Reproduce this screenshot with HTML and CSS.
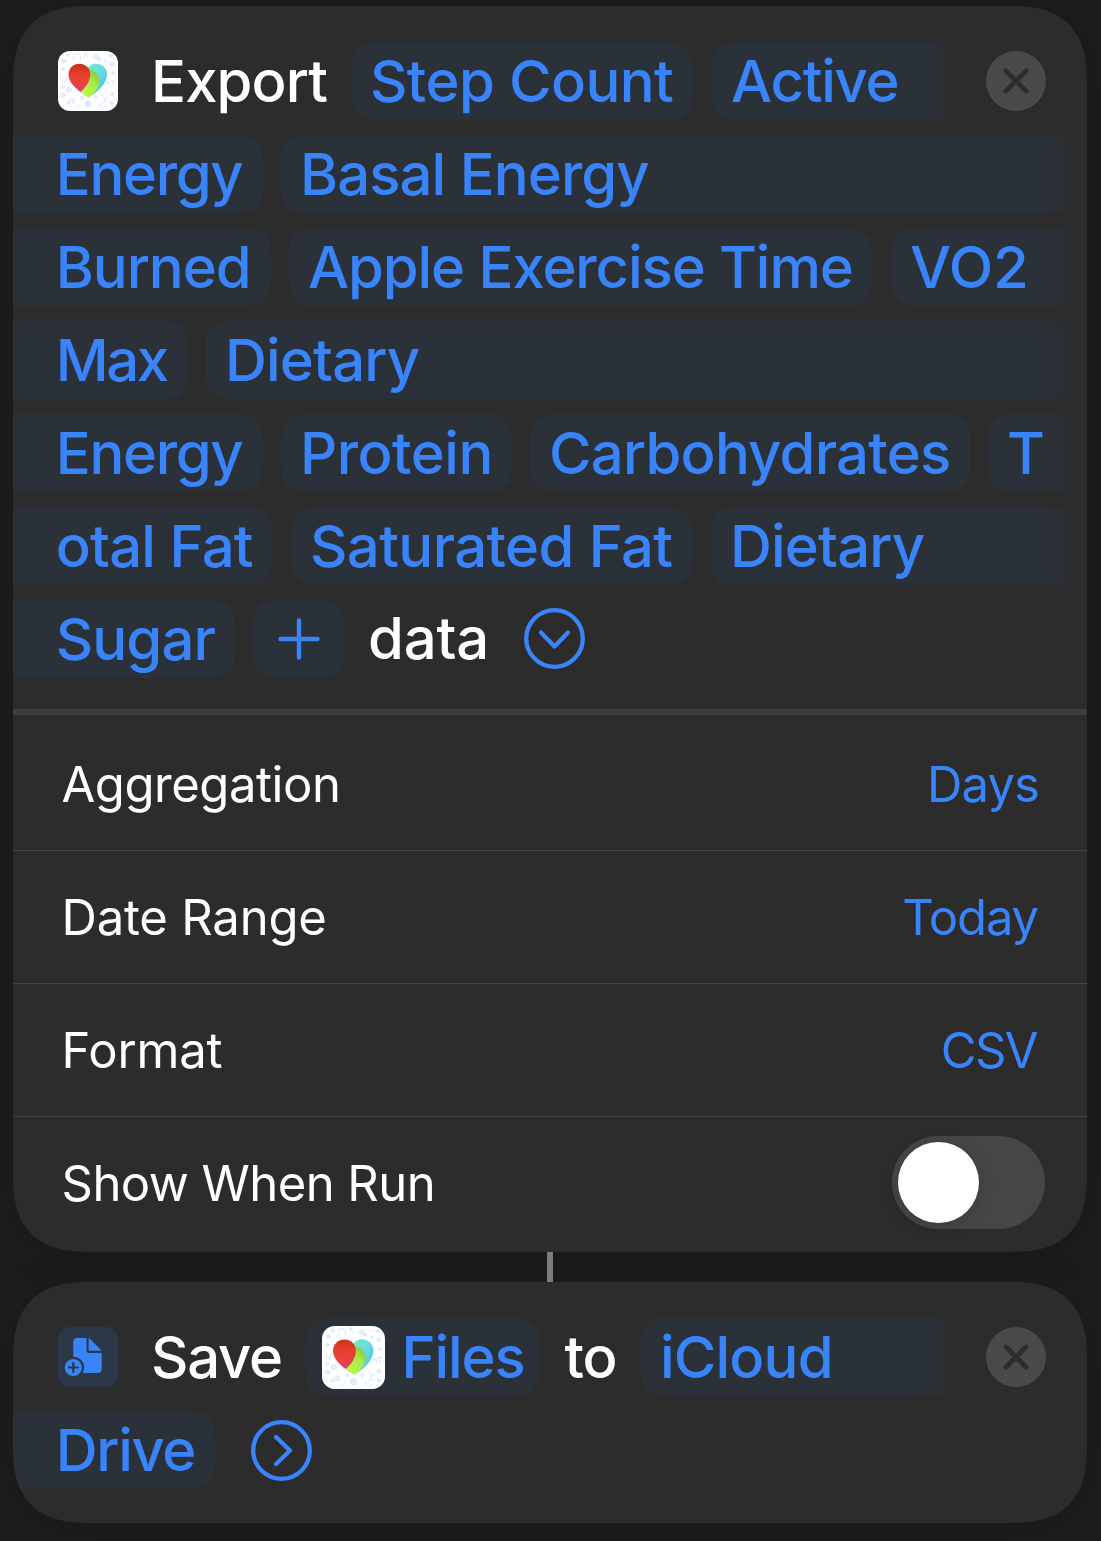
FILE: index.html
```html
<!DOCTYPE html>
<html lang="en">
<head>
<meta charset="utf-8">
<title>Shortcut</title>
<link rel="stylesheet" href="styles.css">
</head>
<body>
<svg class="defs" width="0" height="0" aria-hidden="true">
  <defs>
    <linearGradient id="red" x1="0" y1="0" x2="0" y2="1"><stop offset="0" stop-color="#c8321f"/><stop offset=".4" stop-color="#ea402c"/><stop offset=".7" stop-color="#ea4140"/><stop offset="1" stop-color="#e03a86"/></linearGradient>
    <linearGradient id="green" x1="1" y1="0" x2=".3" y2="1"><stop offset="0" stop-color="#7fb52c"/><stop offset=".45" stop-color="#a4ec48"/><stop offset="1" stop-color="#bdf94a"/></linearGradient>
    <linearGradient id="cyan" x1="0" y1="0" x2="1" y2="1"><stop offset="0" stop-color="#74ecc8"/><stop offset=".5" stop-color="#66d9e2"/><stop offset="1" stop-color="#4fb4d6"/></linearGradient>
    <symbol id="health" viewBox="0 0 60 60">
      <rect width="60" height="60" rx="12" fill="#fff"/>
      <g fill="#e9f1fb" stroke="#d6e4f7" stroke-width=".9" stroke-linecap="round">
        <path fill="none" d="M15.500 9V6a3.500 3.500 0 0 1 7 0v3M26 2l4 4m0-4-4 4M28 1v3M46 12l3-3m-3 0 4 4M55 30v6m-2-6h4M49 32h3v4M50 30v3M4 26v3a1.800 1.800 0 0 0 4 0v-3M42 53a3.500 3.500 0 0 0 6 3M44 44l3 3 3-1m-3 1v3l-3 2m3-2 3 2M36 46h4m-2 0v4M22 54l-3 3M12 49v4m0-4 4-1v4"/>
        <circle cx="6" cy="10" r="1.800"/><circle cx="10" cy="4" r="1.300"/><circle cx="38" cy="6" r="2.300"/><circle cx="41" cy="8" r="1.600"/><circle cx="5" cy="18" r="1.400"/><circle cx="54" cy="13" r="2"/><circle cx="53" cy="5" r="1.500"/><circle cx="11" cy="39" r="2.400"/><circle cx="5" cy="36" r="1.300"/><circle cx="5" cy="44" r="2"/><circle cx="30" cy="53" r="3"/><circle cx="29" cy="52.500" r="1"/><circle cx="54" cy="43" r="1.600"/><circle cx="54" cy="52" r="1.500"/><circle cx="10" cy="52" r="1.100"/><circle cx="15" cy="51" r="1"/><circle cx="24" cy="47" r="1.400"/><circle cx="55" cy="22" r="1.200"/>
      </g>
      <path d="M29 18c2-3.500 5.400-5.300 9-5.300 6.300 0 11 4.800 11 10.800C49 32.500 40 41 30.500 46.500Z" fill="url(#cyan)"/>
      <path d="M31 18.500c6 1.500 10.200 5.500 10.200 11.500 0 7-5.200 13.500-10.700 16.500-3-1.500-5.700-3.300-8-5.500Z" fill="url(#green)"/>
      <path d="M21.400 12.800c6 0 10.900 4.500 10.900 10.700 0 7-4.800 13-9.800 17.500C16.500 36.500 10.500 30.500 10.500 23.500c0-6.200 4.900-10.700 10.900-10.700Z" fill="url(#red)"/>
    </symbol>
    <symbol id="close" viewBox="0 0 60 60">
      <circle cx="30" cy="30" r="30" fill="#4a4a4c"/>
      <path d="M19.900 19.900l20.200 20.200M40.100 19.900L19.900 40.100" stroke="#2c2c2c" stroke-width="4.800" stroke-linecap="round"/>
    </symbol>
  </defs>
</svg>

<main class="actions">
  <section class="card">
    <div class="summary">
      <div class="line">
        <svg class="app-icon"><use href="#health"/></svg>
        <span class="word export">Export</span>
        <span class="chip step-count">Step Count</span>
        <span class="chip active fade">Active</span>
        <svg class="close"><use href="#close"/></svg>
      </div>
      <div class="line">
        <span class="chip tail energy">Energy</span>
        <span class="chip basal fade">Basal Energy</span>
      </div>
      <div class="line">
        <span class="chip tail burned">Burned</span>
        <span class="chip exercise">Apple Exercise Time</span>
        <span class="chip vo2 fade">VO2</span>
      </div>
      <div class="line">
        <span class="chip tail max">Max</span>
        <span class="chip dietary fade">Dietary</span>
      </div>
      <div class="line">
        <span class="chip tail energy">Energy</span>
        <span class="chip protein">Protein</span>
        <span class="chip carbs">Carbohydrates</span>
        <span class="chip total fade">T</span>
      </div>
      <div class="line">
        <span class="chip tail total-fat">otal Fat</span>
        <span class="chip saturated">Saturated Fat</span>
        <span class="chip dietary fade">Dietary</span>
      </div>
      <div class="line">
        <span class="chip tail sugar">Sugar</span>
        <span class="chip add"><svg viewBox="0 0 42 42"><path d="M21 2.500v37M2.500 21h37"/></svg></span>
        <span class="word data">data</span>
        <svg class="disclosure" viewBox="0 0 61 61"><circle cx="30.500" cy="30.500" r="28.300"/><path d="M17 24.500l13.500 14 13.500-14"/></svg>
      </div>
    </div>
    <div class="options">
      <div class="option"><span class="agg">Aggregation</span><span class="value days">Days</span></div>
      <div class="option"><span class="range">Date Range</span><span class="value today">Today</span></div>
      <div class="option"><span class="format">Format</span><span class="value csv">CSV</span></div>
      <div class="option"><span class="show">Show When Run</span><span class="toggle"><span class="knob"></span></span></div>
    </div>
  </section>

  <div class="connector"></div>

  <section class="card save-card">
    <div class="summary">
      <div class="line">
        <svg class="app-icon" viewBox="0 0 60 60">
          <rect width="60" height="60" rx="12" fill="#2b3847"/>
          <g fill="#3a84fb">
            <path d="M19.300 11h9.200v12.500a2.500 2.500 0 0 0 2.500 2.500h12.700v16a4 4 0 0 1-4 4H19.300a4 4 0 0 1-4-4V15a4 4 0 0 1 4-4Z"/>
            <path d="M30.600 11c.6.200 1 .5 1.500 1l10.200 10.200c.5.500.8 1 1 1.500H31.200a.6.600 0 0 1-.6-.6Z"/>
            <circle cx="15.300" cy="40.500" r="9.700" stroke="#2b3847" stroke-width="2.200"/>
          </g>
          <path d="M15.300 36v9M10.800 40.500h9" stroke="#2b3847" stroke-width="2.200" stroke-linecap="round"/>
        </svg>
        <span class="word save">Save</span>
        <span class="chip files"><svg class="chip-icon"><use href="#health"/></svg>Files</span>
        <span class="word to">to</span>
        <span class="chip icloud fade">iCloud</span>
        <svg class="close"><use href="#close"/></svg>
      </div>
      <div class="line">
        <span class="chip tail drive">Drive</span>
        <svg class="disclosure next" viewBox="0 0 61 61"><circle cx="30.500" cy="30.500" r="28.300"/><path d="M25 17l14 13.500-14 13.500"/></svg>
      </div>
    </div>
  </section>
</main>
</body>
</html>
```

FILE: styles.css
```css
* { box-sizing: border-box; }

body {
  margin: 0;
  background: #1d1d1d;
  color: #fff;
  font-family: Inter, "Liberation Sans", sans-serif;
  overflow: hidden;
}

.defs { display: block; height: 0; }

.actions {
  display: flex;
  flex-direction: column;
  padding: 6px 14px 18px 13px;
}

.card {
  height: 1246px;
  background: #2c2c2c;
  border-radius: 78px;
  corner-shape: superellipse(1.38);
  overflow: hidden;
  box-shadow: 0 4px 30px rgba(24, 24, 30, .6);
}

.save-card { height: 241px; }

.summary {
  display: flex;
  flex-direction: column;
  gap: 15px;
  height: 703px;
  padding-top: 35.700px;
  font-size: 58px;
  font-weight: 500;
  line-height: 79.400px;
  white-space: pre;
}

.save-card .summary { height: auto; }

.line {
  display: flex;
  align-items: center;
  height: 78px;
}

/* The first line of each summary holds the app icon and the close button. */
.line:first-child { line-height: 78px; }

.app-icon, .close {
  flex: none;
  width: 60px;
  height: 60px;
}

.app-icon { margin-left: 45px; }
.close { margin: 0 41px 0 26px; }

.word, .chip { flex: none; }

.chip {
  height: 78px;
  margin-left: 18px;
  padding-left: 19px;
  border-radius: 27px;
  corner-shape: superellipse(1.38);
  background: #2b3138;
  color: #3a84fb;
}

.chip.tail {
  margin-left: 0;
  padding-left: 42.800px;
  border-radius: 0 27px 27px 0;
}

.chip.fade {
  flex: 1;
  border-radius: 27px 0 0 27px;
  background: linear-gradient(to left, #2b313800 6px, #2b3138 42px);
}

.export { width: 200px; margin-left: 33px; letter-spacing: -.85px; }
.chip.step-count { width: 342px; margin-left: 0; letter-spacing: -.6px; }
.chip.active { margin-left: 19px; letter-spacing: -1.25px; }
.energy { width: 250px; letter-spacing: -1.35px; }
.basal { letter-spacing: -.92px; }
.burned { width: 258px; letter-spacing: -1.05px; }
.chip.exercise { width: 583px; letter-spacing: -1.08px; }
.chip.vo2 { margin-left: 19px; letter-spacing: -.2px; }
.max { width: 175px; letter-spacing: -2.500px; }
.dietary { letter-spacing: -.85px; }
.protein { width: 231px; letter-spacing: -.5px; }
.carbs { width: 440px; letter-spacing: -.76px; }
.total-fat { width: 260px; letter-spacing: -.85px; }
.saturated { width: 402px; letter-spacing: -.6px; }
.sugar { width: 222px; letter-spacing: -.9px; }

.chip.add {
  display: flex;
  align-items: center;
  justify-content: center;
  width: 93px;
  margin-left: 17px;
  padding: 0;
}

.add svg { width: 42px; height: 42px; }
.add path { stroke: #3a84fb; stroke-width: 4.400px; stroke-linecap: round; }

.data { width: 156px; margin-left: 23px; letter-spacing: -.2px; }

.disclosure {
  flex: none;
  width: 61px;
  height: 61px;
  fill: none;
  stroke: #3a84fb;
  stroke-width: 4.300px;
  stroke-linecap: round;
  stroke-linejoin: round;
}

.disclosure.next { margin: 1px 0 0 36px; }

.save { width: 154px; margin-left: 33px; letter-spacing: -1.24px; }

.chip.files {
  display: flex;
  align-items: center;
  gap: 16.500px;
  width: 235px;
  margin-left: 0;
  padding-left: 17px;
  letter-spacing: -1.15px;
}

.chip-icon { flex: none; width: 63px; height: 63px; margin-top: 1px; }
.to { width: 76.500px; margin-left: 24.500px; letter-spacing: -1.17px; }
.chip.icloud { margin-left: 0; letter-spacing: -.8px; }

.chip.active, .chip.icloud {
  background: linear-gradient(to left, #2b313800 0, #2b3138 34px);
}

.drive { width: 202px; letter-spacing: -1.34px; }

.options {
  padding-top: 3px;
  border-top: 6px solid #3e3e40;
  font-size: 49px;
}

.option {
  display: flex;
  align-items: center;
  justify-content: space-between;
  height: 133px;
  padding: 0 49px 0 48.500px;
  border-bottom: 1px solid #454547;
}

.option:last-child { padding-right: 42px; border-bottom: 0; }

.value { color: #3a84fb; }
.agg { letter-spacing: -.45px; }
.show { letter-spacing: -.55px; }
.range, .format { letter-spacing: -.2px; }
.days { margin-right: -1px; letter-spacing: -.9px; }
.today { letter-spacing: -1.15px; }
.csv { margin-right: 1px; letter-spacing: -1.62px; }

.toggle {
  width: 153px;
  height: 93px;
  margin-bottom: 2px;
  padding: 6px;
  border-radius: 47px;
  background: #464648;
}

.knob {
  display: block;
  width: 81px;
  height: 81px;
  border-radius: 50%;
  background: #fff;
  box-shadow: 0 4px 16px rgba(0, 0, 0, .15);
}

.connector {
  align-self: center;
  width: 6px;
  height: 30px;
  background: #7c7c80;
  position: relative;
}
```
